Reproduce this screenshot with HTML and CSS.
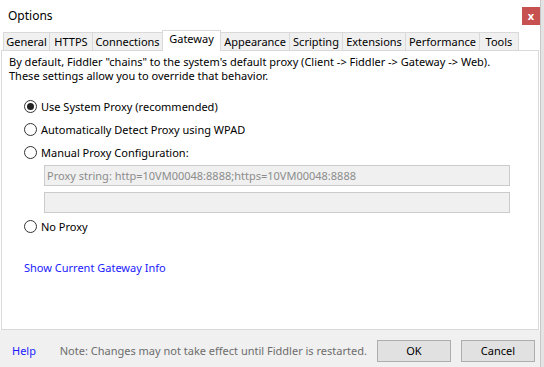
FILE: index.html
```html
<!DOCTYPE html>
<html lang="en">
<head>
  <meta charset="UTF-8" />
  <title>Options</title>
  <link rel="stylesheet" href="styles.css">
</head>
<body>
  <div class="window">
    <div class="titlebar">
      <span class="title">Options</span>
      <button class="close">x</button>
    </div>

    <div class="tabs">
      <div class="tab">General</div>
      <div class="tab">HTTPS</div>
      <div class="tab">Connections</div>
      <div class="tab active">Gateway</div>
      <div class="tab">Appearance</div>
      <div class="tab">Scripting</div>
      <div class="tab">Extensions</div>
      <div class="tab">Performance</div>
      <div class="tab">Tools</div>
    </div>

    <div class="panel">
      <p class="intro">By default, Fiddler "chains" to the system's default proxy (Client -&gt; Fiddler -&gt; Gateway -&gt; Web).<br>These settings allow you to override that behavior.</p>

      <div class="options">
        <label class="radio checked"><span class="dot"></span>Use System Proxy (recommended)</label>
        <label class="radio"><span class="dot"></span>Automatically Detect Proxy using WPAD</label>
        <label class="radio"><span class="dot"></span>Manual Proxy Configuration:</label>
        <div class="manual">
          <div class="field">Proxy string: http=10VM00048:8888;https=10VM00048:8888</div>
          <div class="field"></div>
        </div>
        <label class="radio"><span class="dot"></span>No Proxy</label>
      </div>

      <a class="link gateway-link">Show Current Gateway Info</a>
    </div>

    <div class="footer">
      <a class="link help">Help</a>
      <span class="note">Note: Changes may not take effect until Fiddler is restarted.</span>
      <button class="btn">OK</button>
      <button class="btn">Cancel</button>
    </div>
  </div>
</body>
</html>
```

FILE: styles.css
```css
body {
  margin: 0;
  background-color: #e4e4e4;
  font-family: 'Noto Sans', 'Open Sans', sans-serif;
  font-size: 11px;
  color: #000;
}

.window {
  width: 540px;
  height: 367px;
  background-color: #fff;
  border-right: 1px solid #c8c8c8;
  display: flex;
  flex-direction: column;
}

.titlebar {
  height: 30px;
  display: flex;
  align-items: flex-start;
  justify-content: space-between;
}

.title {
  padding: 7px 0 0 8px;
  font-size: 12px;
}

.close {
  margin: 7px 0 0 0;
  width: 18px;
  height: 18px;
  border: none;
  background-color: #c75050;
  color: #fff;
  font-family: 'Noto Sans', sans-serif;
  font-size: 11px;
  font-weight: bold;
  line-height: 16px;
  padding: 0;
}

/* tab strip */
.tabs {
  display: flex;
  align-items: flex-end;
  height: 20px;
  padding-left: 3px;
  position: relative;
  z-index: 1;
}

.tab {
  height: 18px;
  line-height: 17px;
  text-align: center;
  background-color: #f0f0f0;
  border: 1px solid #d9d9d9;
  border-bottom: none;
  border-left: none;
  box-sizing: border-box;
}

.tab:first-child { border-left: 1px solid #d9d9d9; }
.tab:nth-child(1) { width: 47px; }
.tab:nth-child(2) { width: 43px; }
.tab:nth-child(3) { width: 70px; }
.tab:nth-child(4) { width: 59px; }
.tab:nth-child(5) { width: 69px; }
.tab:nth-child(6) { width: 53px; }
.tab:nth-child(7) { width: 63px; }
.tab:nth-child(8) { width: 74px; }
.tab:nth-child(9) { width: 39px; }

.tab.active {
  height: 21px;
  line-height: 15px;
  background-color: #fff;
  border-left: 1px solid #d9d9d9;
  margin-bottom: -1px;
  margin-left: -1px;
}

/* content */
.panel {
  margin: 0 1px;
  height: 280px;
  border: 1px solid #d9d9d9;
  box-sizing: border-box;
  padding: 4px 7px 0 7px;
}

.intro {
  margin: 0;
  line-height: 14px;
}

.options {
  display: flex;
  flex-direction: column;
  padding: 12px 0 0 15px;
}

.radio {
  display: flex;
  align-items: center;
  height: 23px;
}

.dot {
  width: 13px;
  height: 13px;
  border: 1px solid #333;
  border-radius: 50%;
  box-sizing: border-box;
  margin-right: 4px;
  position: relative;
}

.radio.checked .dot::after {
  content: "";
  position: absolute;
  left: 2px;
  top: 2px;
  width: 7px;
  height: 7px;
  border-radius: 50%;
  background-color: #222;
}

.manual {
  display: flex;
  flex-direction: column;
  gap: 6px;
  padding: 1px 21px 2px 20px;
}

.field {
  height: 21px;
  border: 1px solid #cbcbcb;
  background-color: #f0f0f0;
  box-sizing: border-box;
  color: #8c8c8c;
  line-height: 19px;
  padding-left: 2px;
}

.link {
  color: #1a1aff;
  cursor: pointer;
}

.gateway-link {
  display: block;
  margin: 22px 0 0 15px;
}

/* bottom bar */
.footer {
  flex: 1;
  background-color: #f0f0f0;
  display: flex;
  align-items: center;
  padding: 4px 5px 0 12px;
}

.help {
  width: 49px;
}

.note {
  color: #6d6d6d;
  white-space: nowrap;
  margin-right: auto;
}

.btn {
  width: 76px;
  height: 22px;
  margin-left: 10px;
  background-color: #e1e1e1;
  border: 1px solid #adadad;
  font-family: 'Noto Sans', sans-serif;
  font-size: 11px;
  padding: 0;
}
```
